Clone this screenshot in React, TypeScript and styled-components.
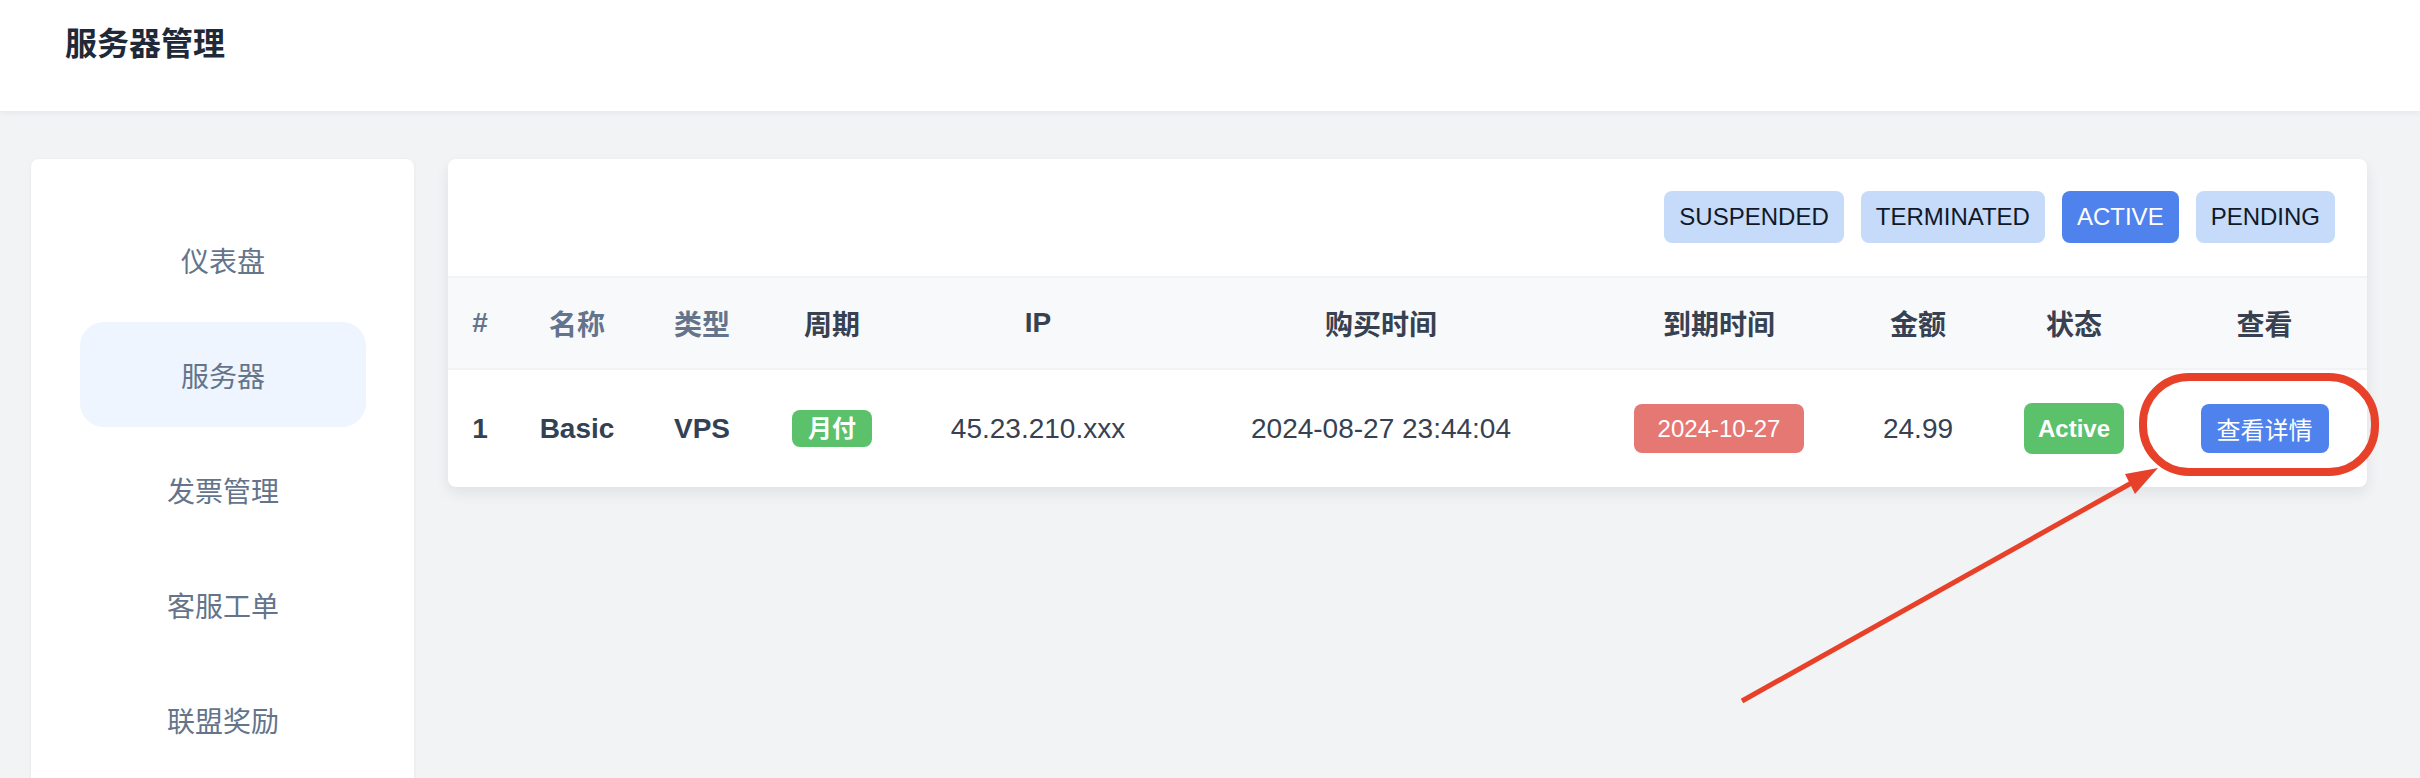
import React from 'react';
import styled, { createGlobalStyle } from 'styled-components';

const GlobalStyle = createGlobalStyle`
  html, body {
    margin: 0;
    padding: 0;
    background: #f2f3f5;
    font-family: "Liberation Sans", "Noto Sans CJK SC", sans-serif;
    overflow: hidden;
  }
  * {
    box-sizing: border-box;
  }
`;

const Page = styled.div`
  position: relative;
  width: 2420px;
  height: 778px;
  overflow: hidden;
`;

const Header = styled.header`
  height: 111px;
  padding: 22px 65px;
  background: white;
  box-shadow: 0 2px 6px rgba(15, 23, 42, 0.05);
  position: relative;
  z-index: 1;
`;

const Title = styled.h1`
  margin: 0;
  font-size: 32px;
  line-height: 44px;
  font-weight: 700;
  color: #1f2937;
`;

const Body = styled.div`
  display: flex;
  align-items: flex-start;
  gap: 34px;
  padding: 48px 53px 0 31px;
`;

const Sidebar = styled.nav`
  flex: 0 0 383px;
  height: 680px;
  padding: 48px 48px 48px 49px;
  background: white;
  border-radius: 8px;
  box-shadow: 0 1px 4px rgba(15, 23, 42, 0.06);
  display: flex;
  flex-direction: column;
  gap: 10px;
`;

const NavItem = styled.a<{ $active?: boolean }>`
  display: flex;
  align-items: center;
  justify-content: center;
  height: 105px;
  border-radius: 24px;
  font-size: 28px;
  color: #64748b;
  text-decoration: none;
  background: ${(p) => (p.$active ? '#eef5fe' : 'transparent')};
`;

const Card = styled.section`
  flex: 1;
  background: white;
  border-radius: 8px;
  box-shadow: 0 6px 14px rgba(15, 23, 42, 0.08);
  overflow: hidden;
`;

const FilterBar = styled.div`
  display: flex;
  justify-content: flex-end;
  gap: 17px;
  padding: 32px 32px 33px;
`;

const FilterButton = styled.button<{ $active?: boolean }>`
  height: 52px;
  padding: 0 15px;
  border: none;
  border-radius: 8px;
  font-family: inherit;
  font-size: 24px;
  color: ${(p) => (p.$active ? 'white' : '#111827')};
  background: ${(p) => (p.$active ? '#4f82ed' : '#c5dbf9')};
`;

const Table = styled.table`
  width: 100%;
  table-layout: fixed;
  border-collapse: collapse;
`;

const HeadRow = styled.tr`
  background: #f8f9fb;
  border-top: 2px solid #f1f3f6;
  border-bottom: 2px solid #f1f3f6;
`;

const Th = styled.th<{ $muted?: boolean }>`
  height: 92px;
  padding: 0;
  text-align: center;
  font-size: 28px;
  font-weight: 700;
  color: ${(p) => (p.$muted ? '#64748b' : '#374151')};
`;

const Td = styled.td<{ $strong?: boolean }>`
  height: 118px;
  padding: 0;
  text-align: center;
  font-size: 28px;
  font-weight: ${(p) => (p.$strong ? 700 : 400)};
  color: ${(p) => (p.$strong ? '#334155' : '#374151')};
`;

type BadgeSize = 'compact' | 'regular' | 'status';

const badgePadding: Record<BadgeSize, string> = {
  compact: '4px 16px',
  regular: '10px 24px',
  status: '11px 14px',
};

const Badge = styled.span<{ $tone: 'green' | 'red'; $size: BadgeSize; $bold?: boolean }>`
  display: inline-block;
  font-size: 24px;
  line-height: 29px;
  padding: ${(p) => badgePadding[p.$size]};
  border-radius: 8px;
  color: white;
  font-weight: ${(p) => (p.$bold ? 700 : 400)};
  background: ${(p) => (p.$tone === 'green' ? '#5cc16b' : '#e57873')};
`;

const DetailButton = styled.button`
  height: 49px;
  padding: 0 16px;
  border: none;
  border-radius: 8px;
  background: #4f82ed;
  color: white;
  font-family: inherit;
  font-size: 24px;
`;

const Annotation = styled.svg`
  position: absolute;
  left: 0;
  top: 0;
  width: 2420px;
  height: 778px;
  pointer-events: none;
  z-index: 5;
`;

const columns = [64, 130, 120, 140, 272, 414, 262, 136, 176, 205];

const headers: { label: string; muted?: boolean }[] = [
  { label: '#', muted: true },
  { label: '名称', muted: true },
  { label: '类型', muted: true },
  { label: '周期' },
  { label: 'IP' },
  { label: '购买时间' },
  { label: '到期时间' },
  { label: '金额' },
  { label: '状态' },
  { label: '查看' },
];

const navItems = ['仪表盘', '服务器', '发票管理', '客服工单', '联盟奖励'];
const filters = ['SUSPENDED', 'TERMINATED', 'ACTIVE', 'PENDING'];

const App: React.FC = () => {
  return (
    <Page>
      <GlobalStyle />
      <Header>
        <Title>服务器管理</Title>
      </Header>
      <Body>
        <Sidebar>
          {navItems.map((item) => (
            <NavItem key={item} $active={item === '服务器'}>
              {item}
            </NavItem>
          ))}
        </Sidebar>
        <Card>
          <FilterBar>
            {filters.map((f) => (
              <FilterButton key={f} $active={f === 'ACTIVE'}>
                {f}
              </FilterButton>
            ))}
          </FilterBar>
          <Table>
            <colgroup>
              {columns.map((w, i) => (
                <col key={i} width={w} />
              ))}
            </colgroup>
            <thead>
              <HeadRow>
                {headers.map((h) => (
                  <Th key={h.label} $muted={h.muted}>
                    {h.label}
                  </Th>
                ))}
              </HeadRow>
            </thead>
            <tbody>
              <tr>
                <Td $strong>1</Td>
                <Td $strong>Basic</Td>
                <Td $strong>VPS</Td>
                <Td>
                  <Badge $tone="green" $size="compact" $bold>
                    月付
                  </Badge>
                </Td>
                <Td>45.23.210.xxx</Td>
                <Td>2024-08-27 23:44:04</Td>
                <Td>
                  <Badge $tone="red" $size="regular">
                    2024-10-27
                  </Badge>
                </Td>
                <Td>24.99</Td>
                <Td>
                  <Badge $tone="green" $size="status" $bold>
                    Active
                  </Badge>
                </Td>
                <Td>
                  <DetailButton>查看详情</DetailButton>
                </Td>
              </tr>
            </tbody>
          </Table>
        </Card>
      </Body>
      <Annotation viewBox="0 0 2420 778">
        <rect
          x="2143"
          y="377"
          width="232"
          height="95"
          rx="46"
          fill="none"
          stroke="#e8412a"
          strokeWidth="8"
        />
        <line x1="1742" y1="701" x2="2135" y2="481" stroke="#e8412a" strokeWidth="5" />
        <polygon points="2158,468 2135,494 2125,474" fill="#e8412a" />
      </Annotation>
    </Page>
  );
};

export default App;
